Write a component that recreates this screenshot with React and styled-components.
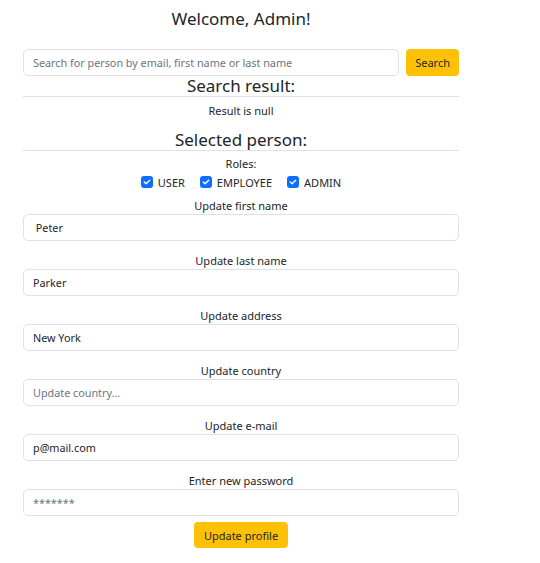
import React from 'react';
import styled, { createGlobalStyle } from 'styled-components';

const GlobalStyle = createGlobalStyle`
  body {
    margin: 0;
    background: #fff;
    font-family: "Noto Sans", "Open Sans", sans-serif;
    color: #212529;
  }
`;

const Page = styled.div`
  width: 436px;
  padding: 8px 0 0 23px;
`;

const Title = styled.h1`
  margin: 0;
  font-size: 17px;
  font-weight: 400;
  line-height: 22px;
  text-align: center;
`;

const SearchRow = styled.div`
  display: flex;
  gap: 7px;
  margin-top: 19px;
`;

const Input = styled.input`
  box-sizing: border-box;
  width: 100%;
  height: 27px;
  padding: 0 9px;
  border: 1px solid #dee2e6;
  border-radius: 5px;
  font-family: inherit;
  font-size: 10.8px;
  color: #212529;
  outline: none;

  &::placeholder {
    color: #6c757d;
  }
`;

const Button = styled.button`
  flex-shrink: 0;
  height: ${p => p.$h || 27}px;
  padding: 0 ${p => p.$px || 9}px;
  border: none;
  border-radius: 4px;
  background: #ffc107;
  color: #212529;
  font-family: inherit;
  font-size: 11px;
  cursor: pointer;
`;

const SectionTitle = styled.h2`
  margin: ${p => p.$m || '0'};
  font-size: 17px;
  font-weight: 400;
  line-height: 20px;
  text-align: center;
  border-bottom: 1px solid #dee2e6;
`;

const Text = styled.div`
  font-size: 11px;
  line-height: 16px;
  text-align: center;
  margin: ${p => p.$m || '0'};
`;

const Roles = styled.div`
  display: flex;
  justify-content: center;
  gap: 15px;
  margin-top: 2px;
  height: 16px;
  align-items: center;
`;

const Check = styled.label`
  display: flex;
  align-items: center;
  gap: 5px;
  font-size: 11px;
`;

const Box = styled.span`
  width: 12px;
  height: 12px;
  border-radius: 3px;
  background: #0d6efd;
  display: flex;
  align-items: center;
  justify-content: center;
`;

const Field = styled.div`
  margin-top: ${p => p.$first ? '8px' : '12px'};
`;

const Actions = styled.div`
  display: flex;
  justify-content: center;
  margin-top: 6px;
`;

const fields = [
  { label: 'Update first name', value: ' Peter' },
  { label: 'Update last name', value: 'Parker' },
  { label: 'Update address', value: 'New York' },
  { label: 'Update country', placeholder: 'Update country...' },
  { label: 'Update e-mail', value: 'p@mail.com' },
  { label: 'Enter new password', placeholder: '*******' },
];

const Tick = () => (
  <svg width="8" height="6" viewBox="0 0 8 6">
    <path d="M1.3 3l1.8 1.8L6.7 1.2" fill="none" stroke="#fff" strokeWidth="1.4" strokeLinecap="round" strokeLinejoin="round" />
  </svg>
);

const App = () => (
  <Page>
    <GlobalStyle />
    <Title>Welcome, Admin!</Title>
    <SearchRow>
      <Input placeholder="Search for person by email, first name or last name" />
      <Button>Search</Button>
    </SearchRow>
    <SectionTitle>Search result:</SectionTitle>
    <Text $m="6px 0 0">Result is null</Text>
    <SectionTitle $m="11px 0 0">Selected person:</SectionTitle>
    <Text $m="5px 0 0">Roles:</Text>
    <Roles>
      {['USER', 'EMPLOYEE', 'ADMIN'].map(r => (
        <Check key={r}><Box><Tick /></Box>{r}</Check>
      ))}
    </Roles>
    {fields.map((f, i) => (
      <Field key={f.label} $first={i === 0}>
        <Text>{f.label}</Text>
        <Input defaultValue={f.value} placeholder={f.placeholder} />
      </Field>
    ))}
    <Actions>
      <Button $h={26} $px={10}>Update profile</Button>
    </Actions>
  </Page>
);

export default App;
